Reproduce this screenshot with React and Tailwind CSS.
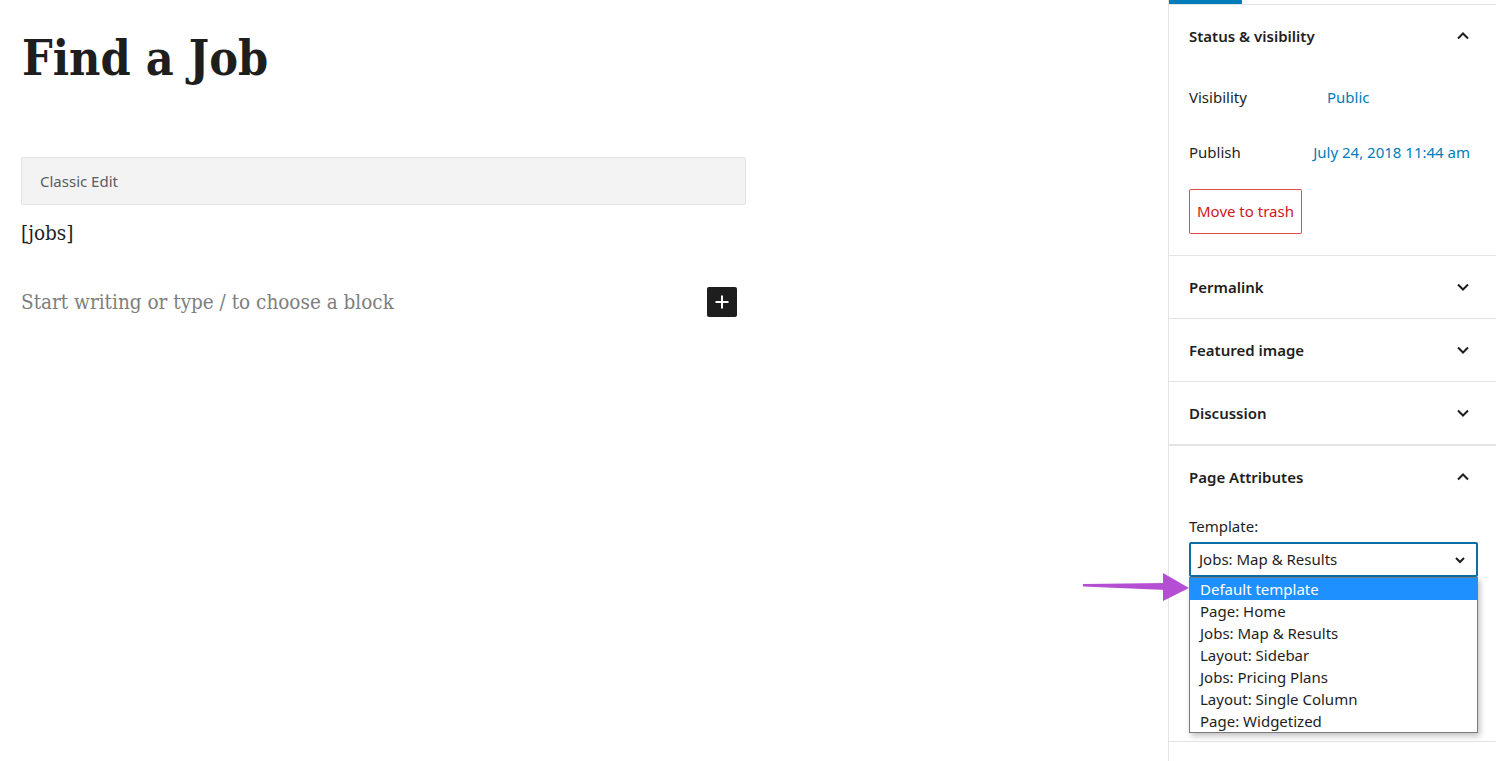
import React from "react";

const sans = { fontFamily: '"Noto Sans", "Open Sans", sans-serif' };
const serifC = {
  fontFamily: '"DejaVu Serif Condensed", "DejaVu Serif", "Liberation Serif", serif',
  fontStretch: "condensed",
};

function ChevronUp() {
  return (
    <svg width="14" height="10" viewBox="0 0 14 10" className="block">
      <path d="M2 7.5 L7 2.5 L12 7.5" fill="none" stroke="#1e1e1e" strokeWidth="2" />
    </svg>
  );
}
function ChevronDown() {
  return (
    <svg width="14" height="10" viewBox="0 0 14 10" className="block">
      <path d="M2 2.5 L7 7.5 L12 2.5" fill="none" stroke="#1e1e1e" strokeWidth="2" />
    </svg>
  );
}

function PanelHeader({ title, open }) {
  return (
    <div className="flex items-center justify-between h-[62px] pl-[20px] pr-[26px]">
      <span className="text-[15px] font-semibold text-[#1e1e1e]">{title}</span>
      {open ? <ChevronUp /> : <ChevronDown />}
    </div>
  );
}

export default function App() {
  const options = [
    "Default template",
    "Page: Home",
    "Jobs: Map & Results",
    "Layout: Sidebar",
    "Jobs: Pricing Plans",
    "Layout: Single Column",
    "Page: Widgetized",
  ];
  return (
    <div className="w-[1496px] h-[761px] bg-white flex overflow-hidden relative">
      {/* Editor */}
      <div className="flex-1 pl-[21px] pt-[28px]">
        <h1
          className="text-[48px] font-bold text-[#1e1e1e] leading-[60px] pl-[1px]"
          style={serifC}
        >
          Find a Job
        </h1>
        <div className="w-[725px] mt-[69px]">
          <div
            className="h-[48px] bg-[#f3f3f3] border border-[#e2e4e7] rounded-[2px] flex items-center pl-[18px] text-[15px] text-[#555d66]"
            style={sans}
          >
            Classic Edit
          </div>
          <div
            className="mt-[14px] text-[20.5px] text-[#1e1e1e] leading-[28px]"
            style={serifC}
          >
            [jobs]
          </div>
          <div className="mt-[40px] flex items-center justify-between pr-[9px]">
            <span className="text-[20.5px] text-[#7e7e7e]" style={serifC}>
              Start writing or type / to choose a block
            </span>
            <div className="w-[30px] h-[30px] bg-[#1e1e1e] rounded-[2px] flex items-center justify-center">
              <svg width="16" height="16" viewBox="0 0 16 16">
                <path d="M8 1.5 V14.5 M1.5 8 H14.5" stroke="#fff" strokeWidth="2" />
              </svg>
            </div>
          </div>
        </div>
      </div>

      {/* Sidebar */}
      <div className="w-[328px] border-l border-[#e2e4e7] flex flex-col" style={sans}>
        <div className="h-[5px] border-b border-[#e2e4e7] flex">
          <div className="w-[73px] h-[4px] bg-[#007cba]" />
        </div>
        {/* Status & visibility */}
        <div className="border-b border-[#e2e4e7] pb-[21px]">
          <PanelHeader title="Status & visibility" open />
          <div className="pl-[20px] pr-[26px] text-[15px]">
            <div className="flex items-center h-[24px] mt-[18px]">
              <span className="w-[138px] text-[#1e1e1e]">Visibility</span>
              <span className="text-[#007cba]">Public</span>
            </div>
            <div className="flex items-center justify-between h-[24px] mt-[31px]">
              <span className="text-[#1e1e1e]">Publish</span>
              <span className="text-[#007cba]">July 24, 2018 11:44 am</span>
            </div>
            <div className="mt-[25px] inline-flex items-center h-[45px] px-[8px] rounded-[2px] text-[#cc1818] shadow-[inset_0_0_0_1px_#d94f4f]">
              Move to trash
            </div>
          </div>
        </div>
        <div className="border-b border-[#e2e4e7]">
          <PanelHeader title="Permalink" />
        </div>
        <div className="border-b border-[#e2e4e7]">
          <PanelHeader title="Featured image" />
        </div>
        <div className="border-b-2 border-[#e2e4e7]">
          <PanelHeader title="Discussion" />
        </div>
        <div className="border-b border-[#e2e4e7]">
          <PanelHeader title="Page Attributes" open />
          <div className="pl-[20px] pr-[18px]">
            <div className="text-[15px] text-[#1e1e1e] leading-[20px] mt-[8px]">Template:</div>
            <div className="mt-[6px]">
              <div className="h-[35px] border-2 border-[#0a6ea8] rounded-[2px] flex items-center justify-between pl-[8px] pr-[10px] text-[15px] text-[#1e1e1e]">
                <span>Jobs: Map &amp; Results</span>
                <svg width="12" height="8" viewBox="0 0 12 8">
                  <path d="M2 2 L6 6 L10 2" fill="none" stroke="#1e1e1e" strokeWidth="2" />
                </svg>
              </div>
              <div className="h-[164px]" />
            </div>
          </div>
        </div>
        <div className="flex-1" />
      </div>

      {/* Dropdown list overlay */}
      <div
        className="absolute left-[1189px] top-[577px] w-[289px] bg-white border border-[#7a7a7a] shadow-[2px_3px_6px_rgba(0,0,0,0.25)] text-[15px] text-[#1e1e1e]"
        style={sans}
      >
        {options.map((o, i) => (
          <div
            key={o}
            className={
              i === 0
                ? "h-[22px] leading-[22px] pl-[10px] bg-[#1e90ff] text-white"
                : "h-[22px] leading-[22px] pl-[10px]"
            }
          >
            {o}
          </div>
        ))}
      </div>

      {/* Purple arrow */}
      <svg
        className="absolute left-[1080px] top-[570px]"
        width="112"
        height="34"
        viewBox="0 0 112 34"
      >
        <path d="M3 14 L86 13 L86 20 L3 16.5 Z" fill="#b44fd4" />
        <path d="M83 3 L109 18 L83 31 Z" fill="#b44fd4" />
      </svg>
    </div>
  );
}
